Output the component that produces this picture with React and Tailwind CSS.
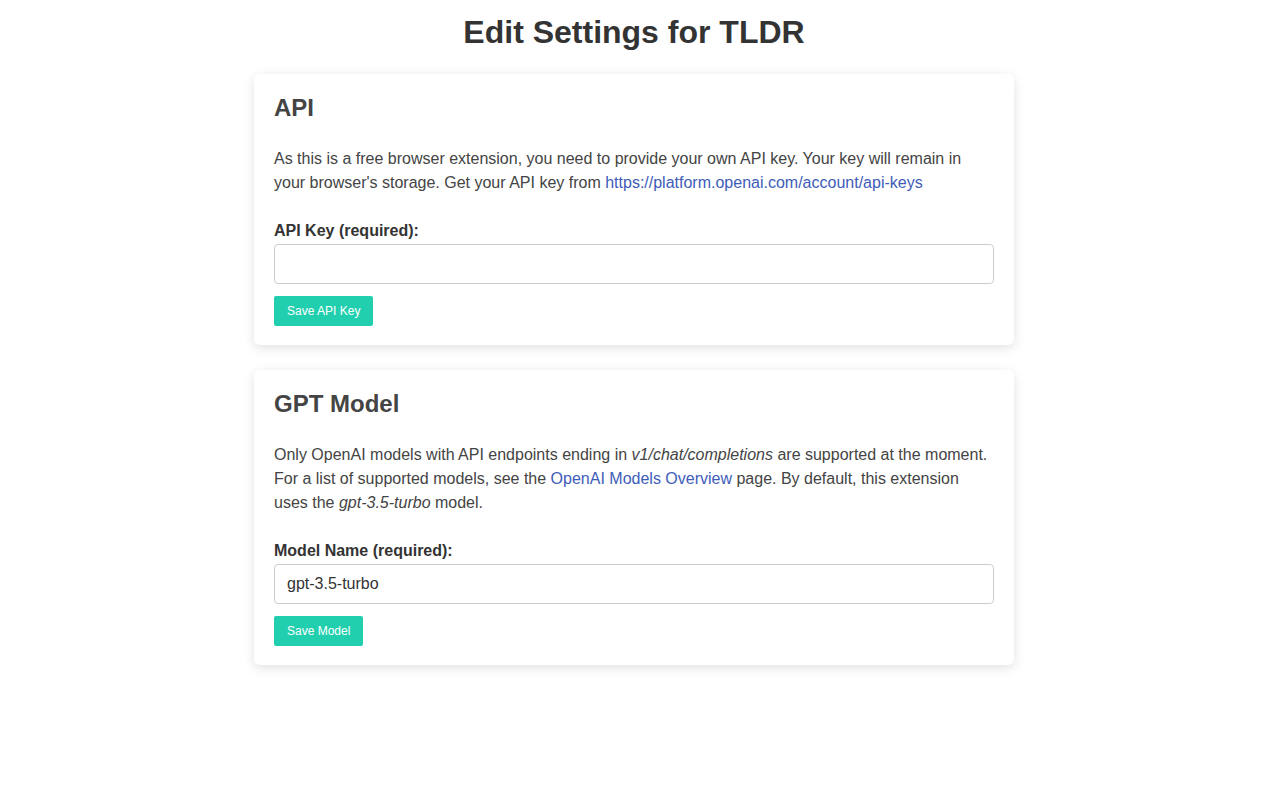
import { useState } from 'react';

const Card = ({ title, children }) => (
  <div className="bg-white rounded-md shadow-[0_3px_12px_rgba(0,0,0,0.12)] px-5 pt-5 pb-[19px] mb-[25px]">
    <h2 className="text-2xl font-bold text-[#444] leading-[28px] mb-[25px]">{title}</h2>
    {children}
  </div>
);

const App = () => {
  const [apiKey, setApiKey] = useState('');
  const [model, setModel] = useState('gpt-3.5-turbo');

  return (
    <div className="min-h-screen bg-white pr-3 font-['Liberation_Sans',Arial,sans-serif] text-[#444]">
      <h1 className="text-[32px] font-bold text-[#333] text-center leading-[37px] pt-[14px] mb-[23px]">
        Edit Settings for TLDR
      </h1>
      <div className="w-[760px] mx-auto">
        <Card title="API">
          <p className="text-base leading-6 text-[#444] mb-[27px]">
            As this is a free browser extension, you need to provide your own API key. Your key will remain in
            your browser's storage. Get your API key from{' '}
            <a href="#" className="text-[#3e5cb8]">https://platform.openai.com/account/api-keys</a>
          </p>
          <label className="block font-bold text-[#333] text-base leading-[18px] mb-1">API Key (required):</label>
          <input
            className="block w-full h-10 border border-[#ccc] rounded px-3 text-base text-[#333] outline-none"
            type="text"
            value={apiKey}
            onChange={(e) => setApiKey(e.target.value)}
          />
          <button className="mt-3 h-[30px] px-[13px] bg-[#21cfae] text-white text-xs rounded-[2px]">
            Save API Key
          </button>
        </Card>

        <Card title="GPT Model">
          <p className="text-base leading-6 text-[#444] mb-[27px]">
            Only OpenAI models with API endpoints ending in <em>v1/chat/completions</em> are supported at the moment.
            For a list of supported models, see the{' '}
            <a href="#" className="text-[#3e5cb8]">OpenAI Models Overview</a> page. By default, this extension
            uses the <em>gpt-3.5-turbo</em> model.
          </p>
          <label className="block font-bold text-[#333] text-base leading-[18px] mb-1">Model Name (required):</label>
          <input
            className="block w-full h-10 border border-[#ccc] rounded px-3 text-base text-[#333] outline-none"
            type="text"
            value={model}
            onChange={(e) => setModel(e.target.value)}
          />
          <button className="mt-3 h-[30px] px-[13px] bg-[#21cfae] text-white text-xs rounded-[2px]">
            Save Model
          </button>
        </Card>
      </div>
    </div>
  );
};

export default App;
